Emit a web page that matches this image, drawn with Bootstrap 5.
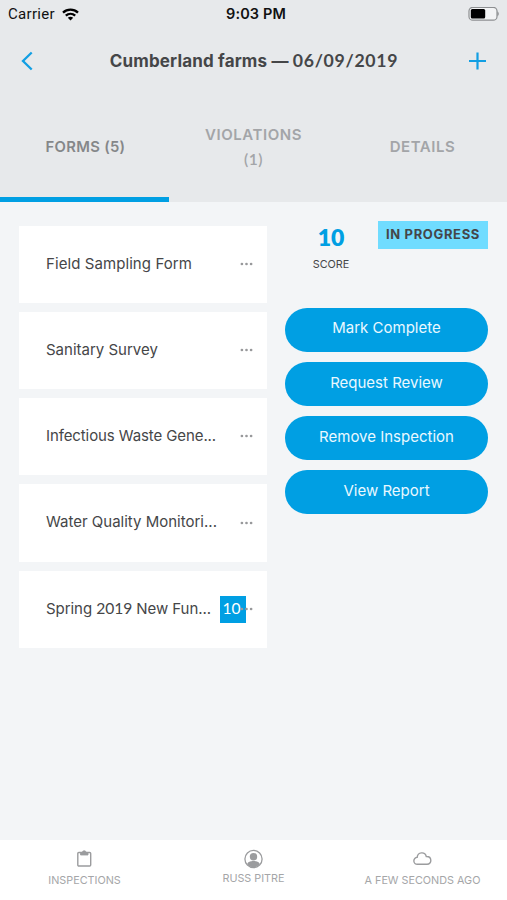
<!DOCTYPE html>
<html lang="en">
<head>
<meta charset="utf-8">
<meta name="viewport" content="width=device-width, initial-scale=1">
<title>Cumberland farms</title>
<link href="https://cdn.jsdelivr.net/npm/bootstrap@5.3.0/dist/css/bootstrap.min.css" rel="stylesheet">
<style>
:root { --brand: #009fe3; }
body { font-family: Inter, "Liberation Sans", sans-serif; background: #f3f5f7; color: #454648; font-size: 15px; }
.screen { height: 900px; overflow: hidden; }
.top-area { background: #e7e9eb; height: 202px; }
.status-bar { height: 28px; padding: 0 8px; color: #111; line-height: 28px; }
.status-bar > div { flex: 1 1 0; }
.carrier { font-family: Roboto, sans-serif; letter-spacing: .3px; font-size: 15px; }
.wifi { margin-left: 7px; }
.clock { font-size: 14.5px; letter-spacing: .1px; padding-left: 5px; }
.title-bar { height: 66px; padding: 0 20px; }
.title-bar h1 { font-size: 17px; letter-spacing: .16px; padding-left: 5px; }
.title-bar .num { letter-spacing: .7px; }
.num { font-family: Lato, sans-serif; font-size: 1.04em; }
.tab-row { height: 108px; }
.tab-item { color: #a3a5a8; font-weight: 600; font-size: 15px; line-height: 24px; border-bottom: 5px solid transparent; padding: 3px 30px 0; }
.tab-item.active { color: #858789; border-color: var(--brand); letter-spacing: .3px; }
.tab-forms { font-size: 14.8px; padding-left: 2px; }
.tab-wide { letter-spacing: .55px; }
.main-area { padding: 23.5px 19px 0; }
.form-list { width: 248px; gap: 9px; }
.form-item { height: 77.3px; padding: 0 14px .6px 27px; }
.dots { width: 13px; height: 4px; }
.f1 { letter-spacing: .08px; }
.f3 { letter-spacing: -.1px; }
.f5 { letter-spacing: -.06px; }
.score-tag { background: var(--brand); color: #fff; width: 26px; height: 27px; line-height: 25px; right: 21.5px; top: 25px; padding-left: 3px; }
.side { width: 203px; }
.score-box { width: 92px; margin-top: -2px; }
.score-val { color: var(--brand); font-size: 23px; line-height: 26px; font-weight: 800; }
.score-cap { font-size: 10.8px; line-height: 16px; margin-top: 7px; }
.state-tag { background: #70dcff; height: 28px; width: 110px; font-size: 13px; letter-spacing: .65px; line-height: 26px; font-weight: 700; margin-top: -5px; }
.acts { margin-top: 35px; gap: 10.3px; }
.btn-act { background: var(--brand); color: #e9f8ff; height: 44px; font-size: 15px; padding: 0 0 2px; border: 0; }
.foot { height: 60px; color: #a5a6a8; font-size: 10.8px; line-height: 14px; }
.foot > div { width: 33.333%; padding-top: 9px; }
.foot svg { margin-bottom: 5px; }
.foot .user svg { margin-bottom: 3px; }
</style>
<script src="https://cdn.jsdelivr.net/npm/bootstrap@5.3.0/dist/js/bootstrap.bundle.min.js"></script>
</head>
<body>
<svg width="0" height="0" class="position-absolute"><defs><symbol id="dots" viewBox="0 0 13 4"><g fill="#98999b"><circle cx="1.9" cy="2" r="1.35"/><circle cx="6.5" cy="2" r="1.35"/><circle cx="11.1" cy="2" r="1.35"/></g></symbol></defs></svg>
<div class="screen d-flex flex-column">
  <header class="top-area flex-shrink-0">
    <div class="status-bar d-flex align-items-center">
      <div class="d-flex align-items-center"><span class="carrier">Carrier</span>
        <svg class="wifi" width="17" height="13" viewBox="0 0 17 13" fill="none" stroke="#000" stroke-width="2.3"><path d="M1 4.6C5.2.6 11.8.6 16 4.6"/><path d="M3.8 7.7c2.7-2.5 6.7-2.5 9.4 0"/><path d="M8.5 12.4 5.8 9.7c1.6-1.4 3.8-1.4 5.4 0z" fill="#000" stroke="none"/></svg>
      </div>
      <div class="clock text-center fw-semibold">9:03 PM</div>
      <div class="d-flex justify-content-end">
        <svg width="32" height="15" viewBox="0 0 32 15"><rect x="2" y=".3" width="28" height="12.9" rx="3.8" fill="#f3f4f5" stroke="#8d8f91" stroke-width="1.2"/><rect x="3.8" y="2.1" width="14.4" height="9.4" rx="1.5"/><path d="M30.4 4.500c1.800.6 1.800 4 0 4.600z" fill="#8d8f91"/></svg>
      </div>
    </div>
    <div class="title-bar d-flex align-items-center justify-content-between">
      <svg width="14" height="20" viewBox="0 0 14 20" fill="none" stroke="#129fe3" stroke-width="2.3"><path d="M11.7 1.5 3 10l8.700 8.500"/></svg>
      <h1 class="mb-0 fw-bold">Cumberland farms — <span class="num">06/09/2019</span></h1>
      <svg width="18" height="18" viewBox="0 0 18 18" stroke="#129fe3" stroke-width="2.2"><path d="M8.500 .5v17M0 9h17"/></svg>
    </div>
    <nav class="tab-row nav nav-fill flex-nowrap">
      <a class="tab-item active col-4 d-flex align-items-center justify-content-center text-decoration-none"><span class="tab-forms">FORMS (5)</span></a>
      <a class="tab-item tab-wide col-4 d-flex flex-column align-items-center justify-content-center text-decoration-none"><span>VIOLATIONS</span><span class="num">(1)</span></a>
      <a class="tab-item tab-wide col-4 d-flex align-items-center justify-content-center text-decoration-none">DETAILS</a>
    </nav>
  </header>
  <main class="main-area d-flex justify-content-between flex-grow-1">
    <div class="form-list d-flex flex-column">
      <div class="form-item bg-white d-flex align-items-center justify-content-between"><span class="f1">Field Sampling Form</span><svg class="dots"><use href="#dots"/></svg></div>
      <div class="form-item bg-white d-flex align-items-center justify-content-between"><span class="f2">Sanitary Survey</span><svg class="dots"><use href="#dots"/></svg></div>
      <div class="form-item bg-white d-flex align-items-center justify-content-between"><span class="f3">Infectious Waste Gene...</span><svg class="dots"><use href="#dots"/></svg></div>
      <div class="form-item bg-white d-flex align-items-center justify-content-between"><span class="f4">Water Quality Monitori...</span><svg class="dots"><use href="#dots"/></svg></div>
      <div class="form-item bg-white d-flex align-items-center justify-content-between position-relative"><span class="f5">Spring <span class="num">2019</span> New Fun...</span><span class="score-tag num position-absolute">10</span><svg class="dots position-relative"><use href="#dots"/></svg></div>
    </div>
    <div class="side">
      <div class="d-flex justify-content-between align-items-start">
        <div class="score-box text-center"><div class="score-val num">10</div><div class="score-cap">SCORE</div></div>
        <div class="state-tag text-center">IN PROGRESS</div>
      </div>
      <div class="acts d-grid">
        <button class="btn btn-act rounded-pill">Mark Complete</button>
        <button class="btn btn-act rounded-pill">Request Review</button>
        <button class="btn btn-act rounded-pill">Remove Inspection</button>
        <button class="btn btn-act rounded-pill">View Report</button>
      </div>
    </div>
  </main>
  <footer class="foot bg-white d-flex text-center flex-shrink-0">
    <div><svg class="d-block mx-auto" width="16" height="20" viewBox="0 0 16 20" fill="none" stroke="#9b9c9e" stroke-width="1.4"><rect x="1.800" y="3.500" width="12.900" height="13.500" rx="1"/><path d="M4.500 3.500v2.500h7.500V3.500H10a1.800 1.800 0 0 0-3.600 0z" fill="#9b9c9e" stroke-width=".8"/></svg>INSPECTIONS</div>
    <div class="user"><svg class="d-block mx-auto" width="20" height="20" viewBox="0 0 20 20"><circle cx="10.500" cy="10" r="8.600" fill="none" stroke="#9b9c9e" stroke-width="1.300"/><circle cx="10.500" cy="7.800" r="3.700" fill="#9b9c9e"/><path d="M4.200 15c1-2.600 3.500-2.500 4.800-3h3c1.300.5 3.800.4 4.800 3-3 4.400-9.600 4.400-12.600 0z" fill="#9b9c9e"/></svg>RUSS PITRE</div>
    <div><svg class="d-block mx-auto" width="19" height="20" viewBox="0 0 19 20" fill="none" stroke="#9b9c9e" stroke-width="1.400"><path d="M4.500 15.300a3.500 3.500 0 0 1-.3-7C4.700 2.900 12 2.300 13.300 7.500c5.800-.3 6 7.800.7 7.800z"/></svg>A FEW SECONDS AGO</div>
  </footer>
</div>
</body>
</html>
